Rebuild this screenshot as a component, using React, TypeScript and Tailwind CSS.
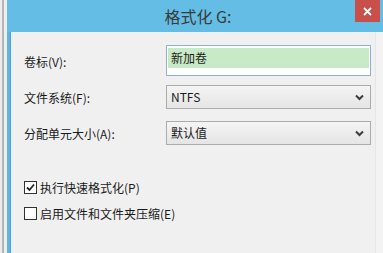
import React from "react";

const font = { fontFamily: '"Noto Sans CJK SC", "Noto Sans", sans-serif' };

function Chevron() {
  return (
    <svg width="9" height="7" viewBox="0 0 9 7" className="shrink-0">
      <path d="M1 1.5 L4.5 5 L8 1.5" stroke="#3c3c3c" strokeWidth="2" fill="none" />
    </svg>
  );
}

function Select({ value }: { value: string }) {
  return (
    <div className="h-[24px] w-[205px] flex items-center justify-between pl-[4px] pr-[6px] border border-[#acacac] bg-gradient-to-b from-[#f4f4f4] to-[#e5e5e5] text-[12px] text-[#1a1a1a]">
      <span>{value}</span>
      <Chevron />
    </div>
  );
}

function Check({ checked, label }: { checked: boolean; label: string }) {
  return (
    <div className="flex items-center gap-[3px] text-[12px] text-[#1a1a1a] h-[13px]">
      <div className="w-[13px] h-[13px] border border-[#333333] bg-white flex items-center justify-center">
        {checked && (
          <svg width="11" height="11" viewBox="0 0 11 11">
            <path d="M2 5.5 L4.5 8 L9 2.5" stroke="#222" strokeWidth="1.8" fill="none" />
          </svg>
        )}
      </div>
      <span>{label}</span>
    </div>
  );
}

export default function App() {
  return (
    <div className="w-[383px] h-[253px] flex bg-[#f0f0f0] overflow-hidden" style={font}>
      <div className="w-[2px] bg-[#ececec]" />
      <div className="w-[2px] bg-[#b6b6b6]" />
      <div className="w-[3px] bg-[#eeeeee]" />
      <div className="flex-1 flex flex-col bg-[#64bde4]">
        <div className="relative h-[32px] flex items-center justify-center pl-[6px]">
          <span className="text-[16px] text-[#3a3a3a] leading-none">格式化 G:</span>
          <div className="absolute right-[3px] top-0 w-[25px] h-[22px] bg-[#c9504a] flex items-center justify-center">
            <svg width="9" height="9" viewBox="0 0 9 9">
              <path d="M1 1 L8 8 M8 1 L1 8" stroke="white" strokeWidth="1.8" />
            </svg>
          </div>
        </div>
        <div className="flex-1 flex">
          <div className="w-[4px] bg-[#5fb6de] border-r border-[#4aa3cf]" />
          <div className="flex-1 bg-[#f0f0f0] flex flex-col pt-[13px] pl-[13px]">
            <div className="flex items-center">
              <div className="w-[142px] text-[12px] text-[#1a1a1a] pt-[3px]">卷标(V):</div>
              <div className="w-[205px] h-[31px] border border-[#8fb2cc] bg-white pt-[2px] px-[1px]">
                <div className="h-[20px] bg-[#c9eac6] flex items-center pl-[3px] text-[12px] text-[#1a1a1a]">
                  新加卷
                </div>
              </div>
            </div>
            <div className="flex items-center mt-[9px]">
              <div className="w-[142px] text-[12px] text-[#1a1a1a] pt-[2px]">文件系统(F):</div>
              <Select value="NTFS" />
            </div>
            <div className="flex items-center mt-[12px]">
              <div className="w-[142px] text-[12px] text-[#1a1a1a] pt-[2px]">分配单元大小(A):</div>
              <Select value="默认值" />
            </div>
            <div className="mt-[36px] flex flex-col gap-[13px]">
              <Check checked label="执行快速格式化(P)" />
              <Check checked={false} label="启用文件和文件夹压缩(E)" />
            </div>
          </div>
          <div className="w-[8px] bg-[#f3f3f3] border-l border-[#e6e6e6]" />
        </div>
      </div>
    </div>
  );
}
